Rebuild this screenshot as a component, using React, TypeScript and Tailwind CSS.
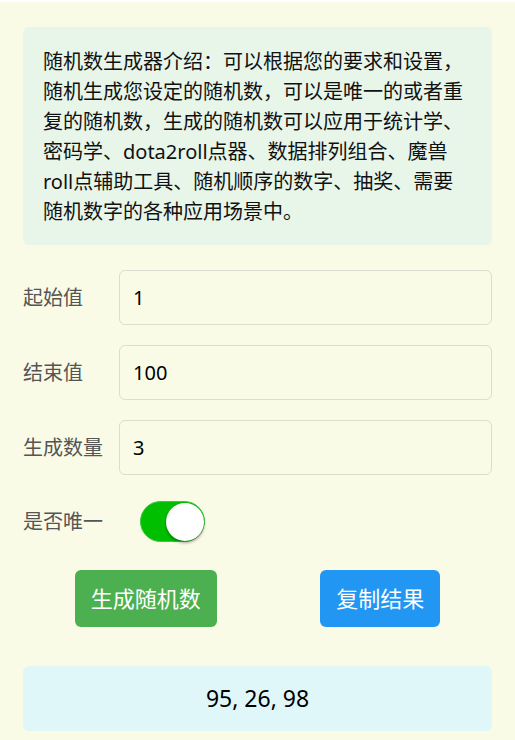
import { useState } from "react";

const font = { fontFamily: '"Noto Sans", "Noto Sans CJK SC", sans-serif' };

export default function App() {
  const [start, setStart] = useState('1');
  const [end, setEnd] = useState('100');
  const [count, setCount] = useState('3');
  const [unique, setUnique] = useState(true);
  const [result] = useState('95, 26, 98');

  const fields = [
    { label: '起始值', value: start, set: setStart },
    { label: '结束值', value: end, set: setEnd },
    { label: '生成数量', value: count, set: setCount },
  ];

  return (
    <div className="min-h-screen bg-white pt-[2px]" style={font}>
      <div className="min-h-[738px] bg-[#f9fbe7] px-[23px] pt-[25px] pb-4">
        {/* Intro */}
        <div className="rounded-md bg-[#e8f5e9] px-5 pt-[20px] pb-[18px] text-[20px] leading-[30px] text-[#111]">
          随机数生成器介绍：可以根据您的要求和设置，随机生成您设定的随机数，可以是唯一的或者重复的随机数，生成的随机数可以应用于统计学、密码学、dota2roll点器、数据排列组合、魔兽roll点辅助工具、随机顺序的数字、抽奖、需要随机数字的各种应用场景中。
        </div>

        {/* Form */}
        <div className="mt-[25px] flex flex-col gap-[20px]">
          {fields.map((f) => (
            <div key={f.label} className="flex items-center">
              <label className="w-[96px] shrink-0 text-[20px] text-[#555]">{f.label}</label>
              <input
                value={f.value}
                onChange={(e) => f.set(e.target.value)}
                className="h-[55px] flex-1 rounded-md border border-[#dcdcd0] bg-[#f9fbe7] px-[13px] text-[20px] text-black outline-none"
              />
            </div>
          ))}
        </div>

        <div className="mt-[26px] flex items-center">
          <span className="w-[117px] shrink-0 text-[20px] text-[#555]">是否唯一</span>
          <button
            onClick={() => setUnique(!unique)}
            className={`flex h-[41px] w-[65px] items-center rounded-full border p-0 ${
              unique ? 'justify-end border-[#3cc63c] bg-[#00bf00]' : 'justify-start border-[#ddd] bg-[#e5e5e5]'
            }`}
          >
            <span className="h-[38px] w-[38px] rounded-full bg-white shadow-[0_2px_3px_rgba(0,0,0,0.35)]" />
          </button>
        </div>

        {/* Actions */}
        <div className="mt-[28px] flex justify-around">
          <button className="h-[57px] rounded-md bg-[#4caf50] px-4 text-[22px] text-white">生成随机数</button>
          <button className="h-[57px] rounded-md bg-[#2196f3] px-4 text-[22px] text-white">复制结果</button>
        </div>

        <div className="mt-[39px] flex h-[65px] items-center justify-center rounded-md bg-[#e0f7fa] text-[23px] text-black">
          {result}
        </div>
      </div>
    </div>
  );
}
